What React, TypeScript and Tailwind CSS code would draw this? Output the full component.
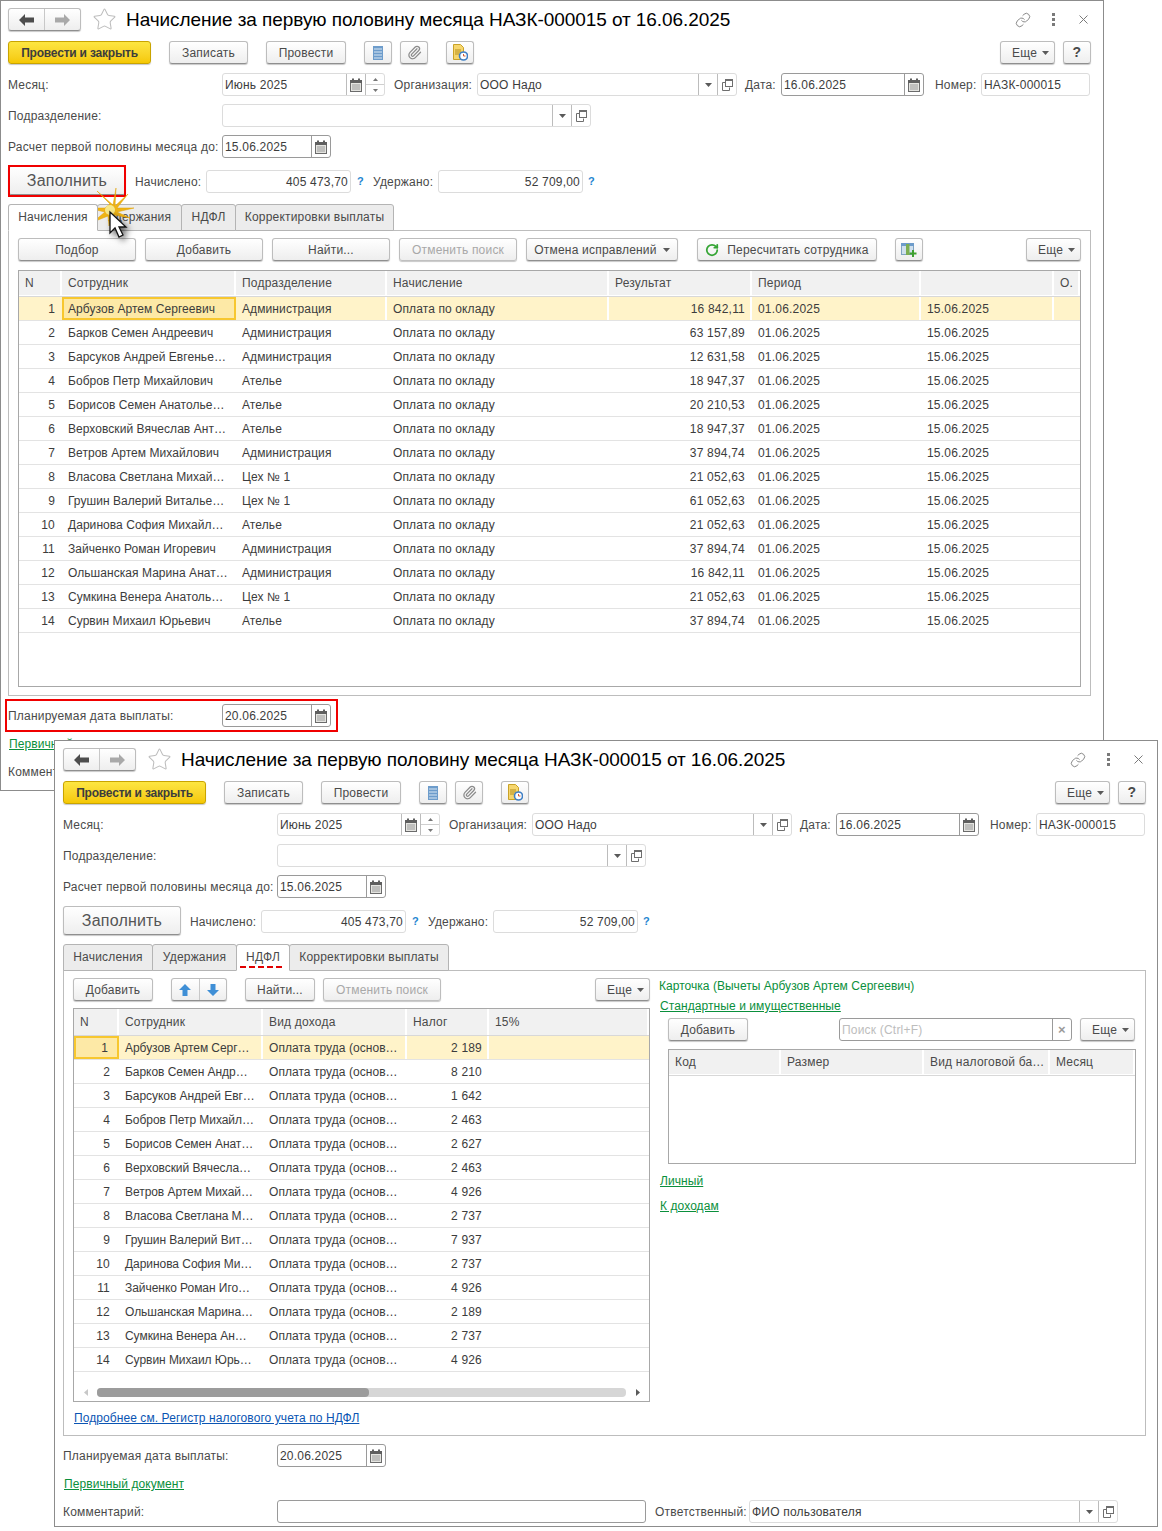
import React from 'react';
import { Link as LinkIcon, Paperclip, RotateCw, Star } from 'lucide-react';

const rows1 = [
  ['Арбузов Артем Сергеевич', 'Администрация', '16 842,11'],
  ['Барков Семен Андреевич', 'Администрация', '63 157,89'],
  ['Барсуков Андрей Евгенье…', 'Администрация', '12 631,58'],
  ['Бобров Петр Михайлович', 'Ателье', '18 947,37'],
  ['Борисов Семен Анатолье…', 'Ателье', '20 210,53'],
  ['Верховский Вячеслав Ант…', 'Ателье', '18 947,37'],
  ['Ветров Артем Михайлович', 'Администрация', '37 894,74'],
  ['Власова Светлана Михай…', 'Цех № 1', '21 052,63'],
  ['Грушин Валерий Виталье…', 'Цех № 1', '61 052,63'],
  ['Даринова София Михайл…', 'Ателье', '21 052,63'],
  ['Зайченко Роман Игоревич', 'Администрация', '37 894,74'],
  ['Ольшанская Марина Анат…', 'Администрация', '16 842,11'],
  ['Сумкина Венера Анатоль…', 'Цех № 1', '21 052,63'],
  ['Сурвин Михаил Юрьевич', 'Ателье', '37 894,74'],
];

const rows2 = [
  ['Арбузов Артем Серг…', '2 189'],
  ['Барков Семен Андр…', '8 210'],
  ['Барсуков Андрей Евг…', '1 642'],
  ['Бобров Петр Михайл…', '2 463'],
  ['Борисов Семен Анат…', '2 627'],
  ['Верховский Вячесла…', '2 463'],
  ['Ветров Артем Михай…', '4 926'],
  ['Власова Светлана М…', '2 737'],
  ['Грушин Валерий Вит…', '7 937'],
  ['Даринова София Ми…', '2 737'],
  ['Зайченко Роман Иго…', '4 926'],
  ['Ольшанская Марина…', '2 189'],
  ['Сумкина Венера Ан…', '2 737'],
  ['Сурвин Михаил Юрь…', '4 926'],
];

const CalendarIcon = () => (
  <svg width="12" height="14" viewBox="0 0 12 14">
    <rect x="0.5" y="2.5" width="11" height="11" fill="#e4e4e0" stroke="#6b6b6b" />
    <rect x="0" y="2" width="12" height="3" fill="#5f5f5f" />
    <rect x="2" y="0.5" width="2" height="3" fill="#5f5f5f" />
    <rect x="8" y="0.5" width="2" height="3" fill="#5f5f5f" />
    <path d="M2 7h8M2 9h8M2 11h8" stroke="#9a9a9a" />
  </svg>
);

const OpenIcon = () => (
  <svg width="11" height="12" viewBox="0 0 11 12" fill="none">
    <path d="M3.5 3.5h-3v8h7v-3" stroke="#6e6e6e" />
    <rect x="3.5" y="0.5" width="7" height="7" fill="#fff" stroke="#6e6e6e" />
    <path d="M3.5 1.5h7" stroke="#6e6e6e" />
  </svg>
);

const Caret = () => (
  <svg width="7" height="4" viewBox="0 0 7 4">
    <path d="M0 0h7L3.5 4z" fill="#5a5a5a" />
  </svg>
);

const NavArrow = ({ color, flip }: { color: string; flip?: boolean }) => (
  <svg width="15" height="12" viewBox="0 0 15 12" className={flip ? 'rotate-180' : ''}>
    <path d="M0 6l6-6v3.5h9v5H6V12z" fill={color} />
  </svg>
);

const DocLinesIcon = () => (
  <svg width="10" height="14" viewBox="0 0 10 14">
    <rect width="10" height="14" fill="#6d9ccb" />
    <path d="M1 3h8M1 6h8M1 9h8M1 12h8" stroke="#dbe8f4" />
  </svg>
);

const DocClockIcon = () => (
  <svg width="15" height="17" viewBox="0 0 15 17">
    <path d="M0.5 0.5h7l3 3v12h-10z" fill="#f6d66d" stroke="#c9a227" />
    <path d="M2 6h6M2 8h6M2 10h4" stroke="#b58f1e" />
    <circle cx="10.5" cy="12" r="4" fill="#fff" stroke="#3f7fc4" strokeWidth="1.6" />
    <path d="M10.5 10v2h2" stroke="#d05a35" fill="none" />
  </svg>
);

const TablePlusIcon = () => (
  <svg width="16" height="16" viewBox="0 0 16 16">
    <rect x="0.5" y="1.5" width="12" height="11" fill="#cfe0ee" stroke="#7fa3c2" />
    <rect x="0" y="1" width="13" height="3" fill="#6d9ccb" />
    <rect x="5" y="2" width="3.5" height="11" fill="#7cae52" />
    <path d="M12 8v7M8.5 11.5h7" stroke="#3da02f" strokeWidth="2" />
  </svg>
);

const BlueArrow = ({ down }: { down?: boolean }) => (
  <svg width="12" height="12" viewBox="0 0 12 12" className={down ? 'rotate-180' : ''}>
    <path d="M6 0l6 6H8.5v6h-5V6H0z" fill="#3f8fd6" />
  </svg>
);

const btnBase =
  'flex items-center justify-center rounded-[3px] border border-[#bdbdbd] border-b-[#8f8f8f] bg-gradient-to-b from-white to-[#eeeeee] shadow-[0_1px_1px_#c8c8c8] text-[#4a4a4a] shrink-0';

const Btn = ({ className, children, disabled }: { className: string; children: React.ReactNode; disabled?: boolean }) => (
  <div className={`${btnBase} h-[23px] ${disabled ? 'text-[#a8a8a8] border-b-[#c0c0c0]' : ''} ${className}`}>{children}</div>
);

const MoreBtn = ({ className }: { className?: string }) => (
  <Btn className={`w-[55px] gap-[5px] pl-[6px] ${className ?? ''}`}>
    Еще <Caret />
  </Btn>
);

const Field = ({
  className,
  value,
  right,
  dark,
  parts = [],
  placeholder,
}: {
  className: string;
  value?: string;
  right?: boolean;
  dark?: boolean;
  parts?: string[];
  placeholder?: string;
}) => (
  <div
    className={`flex h-[23px] shrink-0 items-stretch rounded-[3px] border bg-white text-[#3c3c3c] ${dark ? 'border-[#9a9a9a]' : 'border-[#dcdcdc]'} ${className}`}
  >
    <div className={`min-w-0 flex-1 self-center px-[2px] whitespace-nowrap ${right ? 'text-right' : ''} ${placeholder ? 'text-[#bdbdbd]' : ''}`}>
      {placeholder ?? value}
    </div>
    {parts.map((p) => (
      <div key={p} className={`relative flex w-[19px] items-center justify-center border-l ${dark ? 'border-[#9a9a9a]' : 'border-[#bcbcbc]'}`}>
        {p === 'cal' && <CalendarIcon />}
        {p === 'drop' && <Caret />}
        {p === 'open' && <OpenIcon />}
        {p === 'clear' && <span className="text-[13px] leading-none font-bold text-[#9a9a9a]">×</span>}
        {p === 'spin' && (
          <div className="flex h-full w-full flex-col">
            <div className="flex flex-1 items-center justify-center border-b border-[#cfcfcf]">
              <svg width="5" height="3" viewBox="0 0 5 3"><path d="M0 3h5L2.500 0z" fill="#777" /></svg>
            </div>
            <div className="flex flex-1 items-center justify-center">
              <svg width="5" height="3" viewBox="0 0 5 3"><path d="M0 0h5L2.500 3z" fill="#777" /></svg>
            </div>
          </div>
        )}
      </div>
    ))}
  </div>
);

const Label = ({ className, children }: { className?: string; children: React.ReactNode }) => (
  <div className={`shrink-0 whitespace-nowrap text-[#4a4a4a] ${className ?? ''}`}>{children}</div>
);

const GreenLink = ({ children, className }: { children: React.ReactNode; className?: string }) => (
  <span className={`whitespace-nowrap tracking-[0.08px] text-[#0a8f3c] underline ${className ?? ''}`}>{children}</span>
);

const Hint = ({ className }: { className: string }) => (
  <div className={`shrink-0 text-[11px] font-bold text-[#1f86d0] ${className}`}>?</div>
);

const Tab = ({ className, active, marked, children }: { className: string; active?: boolean; marked?: boolean; children: React.ReactNode }) => (
  <div
    className={`relative flex h-[27px] shrink-0 items-center justify-center rounded-t-[3px] border border-[#b4b4b4] pb-[2px] ${active ? 'z-10 border-b-white bg-white' : 'bg-[#ececec]'} text-[#4a4a4a] ${className}`}
  >
    {children}
    {marked && <div className="absolute right-[7px] bottom-[2px] left-[3px] border-b-2 border-dashed border-[#e00000]" />}
  </div>
);

const Head = ({ className, children }: { className: string; children?: React.ReactNode }) => (
  <div className={`flex shrink-0 items-center border-r-2 border-white bg-[#f1f1f1] pl-[6px] text-[#4a4a4a] ${className}`}>{children}</div>
);

const Cell = ({ className, children, picked, sep }: { className: string; children?: React.ReactNode; picked?: boolean; sep?: boolean }) => (
  <div
    className={`flex h-full shrink-0 items-center overflow-hidden whitespace-nowrap ${picked ? 'border-2 border-[#f7c72f] bg-[#fde9a6]' : ''} ${sep ? 'border-r-2 border-white' : ''} ${className}`}
  >
    {children}
  </div>
);

const rowBase = 'flex h-[24px] border-b border-[#e3e3e3] text-[#3c3c3c]';

const Window = ({
  position,
  tabs,
  panel,
  footer,
}: {
  position: string;
  tabs: React.ReactNode;
  panel: React.ReactNode;
  footer: React.ReactNode;
}) => (
  <div className={`absolute flex w-[1104px] flex-col border border-[#8c8c8c] bg-white pt-[7px] ${position}`}>
    <div className="flex h-[23px] w-[1083px] items-center">
      <div className={`${btnBase} h-[23px] w-[73px]`}>
        <div className="flex h-full flex-1 items-center justify-center border-r border-[#c8c8c8]"><NavArrow color="#4d4d4d" /></div>
        <div className="flex h-full flex-1 items-center justify-center"><NavArrow color="#a9a9a9" flip /></div>
      </div>
      <Star size={25} strokeWidth={1} className="ml-[11px] text-[#bdbdbd]" />
      <div className="ml-[9px] text-[19px] leading-[23px] tracking-[-0.07px] whitespace-nowrap text-black">
        Начисление за первую половину месяца НАЗК-000015 от 16.06.2025
      </div>
      <LinkIcon size={16} strokeWidth={1.4} className="ml-auto text-[#808080]" />
      <div className="ml-[21px] flex flex-col gap-[2px]">
        <div className="size-[3px] bg-[#7a7a7a]" />
        <div className="size-[3px] bg-[#7a7a7a]" />
        <div className="size-[3px] bg-[#7a7a7a]" />
      </div>
      <svg width="9" height="9" viewBox="0 0 9 9" className="mr-[3px] ml-[24px]">
        <path d="M0.500 0.500l8 8M8.500 0.500l-8 8" stroke="#7a7a7a" />
      </svg>
    </div>

    <div className="mt-[10px] flex w-[1083px]">
      <div className="flex h-[23px] w-[143px] shrink-0 items-center justify-center rounded-[3px] border border-[#c9a400] bg-gradient-to-b from-[#fde640] to-[#f5c800] font-bold tracking-[-0.2px] text-[#3c3c3c] shadow-[0_1px_1px_#c8c8c8]">
        Провести и закрыть
      </div>
      <Btn className="ml-[18px] w-[79px]">Записать</Btn>
      <Btn className="ml-[18px] w-[80px]">Провести</Btn>
      <Btn className="ml-[18px] w-[28px]"><DocLinesIcon /></Btn>
      <Btn className="ml-[8px] w-[28px]"><Paperclip size={15} strokeWidth={2} className="text-[#8a8a8a]" /></Btn>
      <Btn className="ml-[18px] w-[28px]"><DocClockIcon /></Btn>
      <MoreBtn className="ml-auto" />
      <Btn className="ml-[8px] w-[28px] font-bold text-[14px]">?</Btn>
    </div>

    <div className="mt-[9px] flex items-center">
      <Label className="w-[214px]">Месяц:</Label>
      <Field className="w-[163px]" value="Июнь 2025" parts={['cal', 'spin']} />
      <Label className="ml-[9px] w-[83px]">Организация:</Label>
      <Field className="w-[260px]" value="ООО Надо" parts={['drop', 'open']} />
      <Label className="ml-[8px] w-[36px]">Дата:</Label>
      <Field className="w-[143px]" value="16.06.2025" dark parts={['cal']} />
      <Label className="ml-[11px] w-[46px]">Номер:</Label>
      <Field className="w-[109px]" value="НАЗК-000015" />
    </div>

    <div className="mt-[8px] flex items-center">
      <Label className="w-[214px]">Подразделение:</Label>
      <Field className="w-[369px]" parts={['drop', 'open']} />
    </div>

    <div className="mt-[8px] flex items-center">
      <Label className="w-[214px]">Расчет первой половины месяца до:</Label>
      <Field className="w-[109px]" value="15.06.2025" dark parts={['cal']} />
    </div>

    <div className="mt-[8px] flex items-start">
      <div className={`${btnBase} h-[29px] w-[118px] text-[16px] text-[#555555]`}>Заполнить</div>
      <div className="mt-[4px] flex items-center">
        <Label className="ml-[9px] w-[71px]">Начислено:</Label>
        <Field className="w-[145px]" value="405 473,70" right />
        <Hint className="ml-[6px] w-[16px]" />
        <Label className="w-[65px]">Удержано:</Label>
        <Field className="w-[145px]" value="52 709,00" right />
        <Hint className="ml-[5px]" />
      </div>
    </div>

    <div className="relative mt-[9px] flex">{tabs}</div>
    <div className="-mt-px h-[466px] w-[1083px] border border-[#bdbdbd] pl-[9px]">{panel}</div>
    {footer}
  </div>
);

const ChargesPanel = () => (
  <>
    <div className="mt-[7px] flex">
      <Btn className="w-[118px]">Подбор</Btn>
      <Btn className="ml-[9px] w-[118px]">Добавить</Btn>
      <Btn className="ml-[9px] w-[118px]">Найти...</Btn>
      <Btn className="ml-[9px] w-[118px]" disabled>Отменить поиск</Btn>
      <Btn className="ml-[9px] w-[152px] gap-[6px]">Отмена исправлений <Caret /></Btn>
      <Btn className="ml-[19px] w-[180px] gap-[8px]"><RotateCw size={14} strokeWidth={3} className="text-[#35a535]" /> Пересчитать сотрудника</Btn>
      <Btn className="ml-[18px] w-[28px]"><TablePlusIcon /></Btn>
      <MoreBtn className="ml-[103px]" />
    </div>
    <div className="mt-[9px] h-[417px] w-[1063px] border border-[#a8a8a8]">
      <div className="flex h-[26px] border-b border-[#d8d8d8] pb-px">
        <Head className="w-[43px]">N</Head>
        <Head className="w-[174px]">Сотрудник</Head>
        <Head className="w-[151px]">Подразделение</Head>
        <Head className="w-[222px]">Начисление</Head>
        <Head className="w-[143px]">Результат</Head>
        <Head className="w-[169px]">Период</Head>
        <Head className="w-[133px]" />
        <Head className="w-[26px] border-r-0">О.</Head>
      </div>
      {rows1.map((r, i) => (
        <div key={i} className={`${rowBase} ${i === 0 ? 'bg-[#fff3c9]' : ''}`}>
          <Cell className="w-[43px] justify-end pr-[7px]">{i + 1}</Cell>
          <Cell className={`w-[174px] tracking-[0.05px] ${i === 0 ? 'pl-[4px]' : 'pl-[6px]'}`} picked={i === 0}>{r[0]}</Cell>
          <Cell className="w-[151px] pl-[6px] tracking-[0.1px]" sep={i === 0}>{r[1]}</Cell>
          <Cell className="w-[222px] pl-[6px] tracking-[0.12px]" sep={i === 0}>Оплата по окладу</Cell>
          <Cell className={`w-[143px] justify-end ${i === 0 ? 'pr-[5px]' : 'pr-[7px]'}`} sep={i === 0}>{r[2]}</Cell>
          <Cell className="w-[169px] pl-[6px]" sep={i === 0}>01.06.2025</Cell>
          <Cell className="w-[133px] pl-[6px]" sep={i === 0}>15.06.2025</Cell>
        </div>
      ))}
    </div>
  </>
);

const NdflPanel = () => (
  <div className="flex">
    <div className="w-[577px] shrink-0">
      <div className="mt-[7px] flex">
        <Btn className="w-[80px]">Добавить</Btn>
        <div className={`${btnBase} ml-[18px] h-[23px] w-[56px]`}>
          <div className="flex h-full flex-1 items-center justify-center border-r border-[#c8c8c8]"><BlueArrow /></div>
          <div className="flex h-full flex-1 items-center justify-center"><BlueArrow down /></div>
        </div>
        <Btn className="ml-[18px] w-[70px]">Найти...</Btn>
        <Btn className="ml-[8px] w-[118px]" disabled>Отменить поиск</Btn>
        <MoreBtn className="ml-auto" />
      </div>
      <div className="mt-[7px] h-[394px] w-[577px] border border-[#a8a8a8]">
        <div className="flex h-[27px] border-b border-[#d8d8d8]">
          <Head className="w-[45px]">N</Head>
          <Head className="w-[144px]">Сотрудник</Head>
          <Head className="w-[144px]">Вид дохода</Head>
          <Head className="w-[82px]">Налог</Head>
          <Head className="w-[160px] border-r-0">15%</Head>
        </div>
        {rows2.map((r, i) => (
          <div key={i} className={`${rowBase} ${i === 0 ? 'bg-[#fff3c9]' : ''}`}>
            <Cell className="w-[45px] justify-end pr-[9px]" picked={i === 0}>{i + 1}</Cell>
            <Cell className="w-[144px] pl-[6px] tracking-[-0.05px]" sep={i === 0}>{r[0]}</Cell>
            <Cell className="w-[144px] pl-[6px] tracking-[0.05px]" sep={i === 0}>Оплата труда (основ…</Cell>
            <Cell className={`w-[82px] justify-end ${i === 0 ? 'pr-[5px]' : 'pr-[7px]'}`} sep={i === 0}>{r[1]}</Cell>
          </div>
        ))}
        <div className="mt-[16px] flex h-[9px] items-center">
          <svg width="4" height="7" viewBox="0 0 4 7" className="ml-[10px]"><path d="M4 0v7L0 3.500z" fill="#c8c8c8" /></svg>
          <div className="ml-[9px] h-[9px] w-[529px] rounded-[4px] bg-[#d6d6d6]">
            <div className="h-full w-[272px] rounded-[4px] bg-[#9c9c9c]" />
          </div>
          <svg width="4" height="7" viewBox="0 0 4 7" className="ml-[10px]"><path d="M0 0v7l4-3.500z" fill="#5a5a5a" /></svg>
        </div>
      </div>
      <div className="mt-[7px] ml-px whitespace-nowrap tracking-[0.08px] text-[#0b55b3] underline">Подробнее см. Регистр налогового учета по НДФЛ</div>
    </div>
    <div className="ml-[9px] w-[486px] shrink-0">
      <div className="mt-[8px] h-[14px] leading-[14px] tracking-[0.03px] text-[#0a8f3c]">Карточка (Вычеты Арбузов Артем Сергеевич)</div>
      <div className="mt-[6px] ml-px h-[14px] leading-[14px]"><GreenLink>Стандартные и имущественные</GreenLink></div>
      <div className="mt-[5px] ml-[9px] flex w-[467px]">
        <Btn className="w-[80px]">Добавить</Btn>
        <Field className="ml-[91px] w-[233px]" dark placeholder="Поиск (Ctrl+F)" parts={['clear']} />
        <MoreBtn className="ml-auto" />
      </div>
      <div className="mt-[8px] ml-[9px] h-[115px] w-[468px] border border-[#a8a8a8]">
        <div className="flex h-[26px] border-b border-[#d8d8d8] pb-px">
          <Head className="w-[112px]">Код</Head>
          <Head className="w-[143px]">Размер</Head>
          <Head className="w-[126px]">Вид налоговой ба…</Head>
          <Head className="w-[85px] border-r-0">Месяц</Head>
        </div>
      </div>
      <div className="mt-[10px] ml-px h-[14px] leading-[14px]"><GreenLink>Личный</GreenLink></div>
      <div className="mt-[11px] ml-px h-[14px] leading-[14px]"><GreenLink>К доходам</GreenLink></div>
    </div>
  </div>
);

// the first window's comment row is mostly under the second window, so only its label is drawn
const Footer = ({ full }: { full?: boolean }) => (
  <>
    <div className="mt-[8px] flex items-center">
      <Label className="w-[214px]">Планируемая дата выплаты:</Label>
      <Field className="w-[109px]" value="20.06.2025" dark parts={['cal']} />
    </div>
    <div className="mt-[10px] h-[14px] pl-px leading-[14px]"><GreenLink>Первичный документ</GreenLink></div>
    <div className={`mt-[9px] flex h-[23px] items-center ${full ? 'mb-[3px]' : 'mb-[7px]'}`}>
      <Label className="w-[214px]">Комментарий:</Label>
      {full && (
        <>
          <Field className="w-[369px]" dark />
          <Label className="ml-[9px] w-[94px]">Ответственный:</Label>
          <Field className="w-[369px]" value="ФИО пользователя" parts={['drop', 'open']} />
        </>
      )}
    </div>
  </>
);

export default function App() {
  return (
    <div className="relative h-[1531px] w-[1162px] overflow-hidden bg-white font-['Liberation_Sans',Arial,sans-serif] text-[12px] tracking-[0.2px]">
      <Window
        position="left-0 top-0 pl-[7px]"
        tabs={
          <>
            <Tab className="w-[90px]" active>Начисления</Tab>
            <Tab className="-ml-px w-[85px]">Удержания</Tab>
            <Tab className="-ml-px w-[55px]">НДФЛ</Tab>
            <Tab className="-ml-px w-[159px]">Корректировки выплаты</Tab>
          </>
        }
        panel={<ChargesPanel />}
        footer={<Footer />}
      />
      <div className="absolute left-[8px] top-[165px] h-[32px] w-[118px] border-2 border-[#f00000]" />
      <div className="absolute left-[5px] top-[699px] h-[33px] w-[333px] border-2 border-[#f00000]" />
      <svg width="70" height="70" viewBox="0 0 70 70" className="absolute left-[82px] top-[180px]">
        <path
          d="M28 24L15 11L31 25L34 8L33 26L46 14L35 28L52 28L35 32L48 38L32 35L27 46L26 36L11 42L23 32L6 28L23 28Z"
          fill="#efb416"
          stroke="#e0a000"
          strokeWidth="0.5"
        />
        <circle cx="28" cy="30" r="5" fill="#f7e888" />
        <path
          d="M28 32v21l5-5 4 9 4-2-4-8h7z"
          fill="#fff"
          stroke="#111"
          strokeWidth="1.300"
          className="drop-shadow-[3px_3px_3px_rgba(0,0,0,0.6)]"
        />
      </svg>
      <Window
        position="left-[54px] top-[740px] pl-[8px]"
        tabs={
          <>
            <Tab className="w-[90px]">Начисления</Tab>
            <Tab className="-ml-px w-[85px]">Удержания</Tab>
            <Tab className="-ml-px w-[54px]" active marked>НДФЛ</Tab>
            <Tab className="-ml-px w-[160px]">Корректировки выплаты</Tab>
          </>
        }
        panel={<NdflPanel />}
        footer={<Footer full />}
      />
    </div>
  );
}
